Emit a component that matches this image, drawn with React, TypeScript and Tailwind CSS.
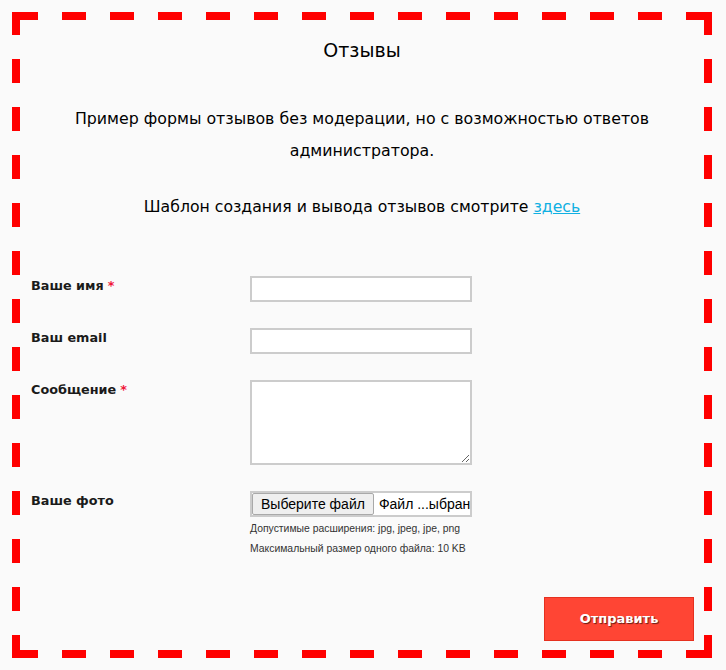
import React from "react";

const font = { fontFamily: '"DejaVu Sans", Verdana, sans-serif' };

function Label({ text, required }: { text: string; required?: boolean }) {
  return (
    <div className="w-[230px] shrink-0 pl-[11px] text-[12.8px] font-bold leading-5 text-[#1a1a1a]">
      {text}
      {required && <span className="ml-1 text-[#f0163a]">*</span>}
    </div>
  );
}

export default function App() {
  return (
    <div className="min-h-[670px] w-[726px] bg-[#fafafa] p-3" style={font}>
      {/* dashed frame: 24px dashes, 24px gaps, like the original 8px dashed border */}
      <div className="h-[646px] w-[700px] p-2 [background:linear-gradient(90deg,#f00_24px,transparent_0)_2px_0/48px_8px_repeat-x,linear-gradient(90deg,#f00_24px,transparent_0)_2px_100%/48px_8px_repeat-x,linear-gradient(#f00_24px,transparent_0)_0_-1px/8px_48px_repeat-y,linear-gradient(#f00_24px,transparent_0)_100%_-1px/8px_48px_repeat-y,#fafafa]">
        <h1 className="pt-[15px] text-center text-[19px] leading-[30px] text-black">Отзывы</h1>

        <p className="mx-auto mt-[38px] w-[640px] text-center text-[15.8px] leading-8 text-black">
          Пример формы отзывов без модерации, но с возможностью ответов администратора.
        </p>
        <p className="mt-6 text-center text-[15.7px] leading-8 text-black">
          Шаблон создания и вывода отзывов смотрите{" "}
          <a href="#" className="text-[#10b0e2] underline">
            здесь
          </a>
        </p>

        <form className="mt-[53px] flex flex-col gap-[26px]">
          <div className="flex">
            <Label text="Ваше имя" required />
            <input className="h-[26px] w-[222px] border-2 border-[#cccccc] bg-white" />
          </div>
          <div className="flex">
            <Label text="Ваш email" />
            <input className="h-[26px] w-[222px] border-2 border-[#cccccc] bg-white" />
          </div>
          <div className="flex">
            <Label text="Сообщение" required />
            <textarea className="h-[85px] w-[222px] border-2 border-[#cccccc] bg-white" />
          </div>
          <div className="flex">
            <Label text="Ваше фото" />
            <div style={{ fontFamily: '"Liberation Sans", Arial, sans-serif' }}>
              <div className="flex h-[26px] w-[222px] items-center overflow-hidden whitespace-nowrap border-2 border-[#cccccc] bg-white text-[14px] text-black">
                <span className="flex h-full items-center rounded-[2px] border border-[#a9a9a9] bg-[#efefef] px-[8px]">
                  Выберите файл
                </span>
                <span className="pl-[5px]">Файл ...ыбран</span>
              </div>
              <div className="mt-[2px] text-[10.4px] leading-5 text-[#333]">
                Допустимые расширения: jpg, jpeg, jpe, png
              </div>
              <div className="text-[10.4px] leading-5 text-[#333]">
                Максимальный размер одного файла: 10 KB
              </div>
            </div>
          </div>
          <div className="flex justify-end pr-[10px] pt-[12px]">
            <button
              type="button"
              className="h-[44px] w-[150px] border border-[#e5301f] bg-[#ff4534] text-[13px] font-bold text-white [text-shadow:1px_1px_1px_rgba(0,0,0,0.6)]"
            >
              Отправить
            </button>
          </div>
        </form>
      </div>
    </div>
  );
}
